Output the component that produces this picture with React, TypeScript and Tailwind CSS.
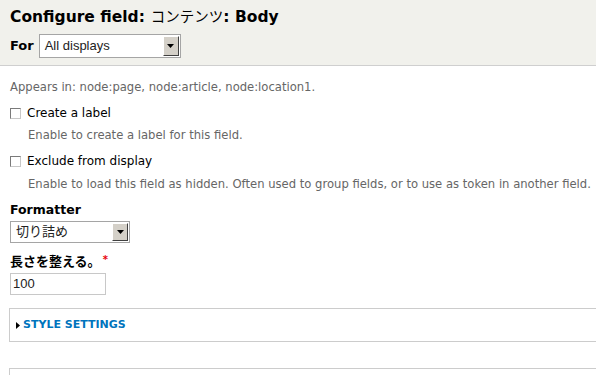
import React from "react";

const F = { fontFamily: '"DejaVu Sans", Verdana, "Noto Sans CJK JP", sans-serif' };
const A = { fontFamily: '"Liberation Sans", Arial, "Noto Sans CJK JP", sans-serif' };

function Select({ value, width, height }: { value: string; width: string; height: string }) {
  return (
    <div className={`flex ${height} ${width} border border-[#a5a5a5] bg-white`}>
      <div className="flex flex-1 items-center pl-[5px] text-[13px] text-[#222]" style={A}>
        {value}
      </div>
      <div className="m-[1px] flex w-[16px] items-center justify-center border border-t-white border-l-white border-r-[#404040] border-b-[#404040] bg-[#d4d0c8]">
        <svg width="7" height="4" viewBox="0 0 7 4">
          <path d="M0 0h7L3.5 4z" fill="#000" />
        </svg>
      </div>
    </div>
  );
}

function Checkbox() {
  return <div className="h-[11px] w-[11px] shrink-0 border border-[#7a7a7a] border-r-[#c8c8c8] border-b-[#c8c8c8] bg-white" />;
}

export default function App() {
  return (
    <div className="h-[375px] w-[596px] overflow-hidden bg-white" style={F}>
      <div className="h-[66px] border-b border-[#cfcfcf] bg-[#f1f1ec] px-[10px] pt-[6px]">
        <h1 className="flex items-baseline whitespace-nowrap text-[15.5px] font-bold leading-[20px] text-black">
          Configure field:
          <span className="ml-[6px] text-[14.5px] font-normal" style={{ fontFamily: '"Noto Sans CJK JP", sans-serif' }}>
            コンテンツ
          </span>
          <span>: Body</span>
        </h1>
        <div className="mt-[7px] flex items-center gap-[5px]">
          <span className="text-[13px] font-bold text-black">For</span>
          <Select value="All displays" width="w-[142px]" height="h-[24px]" />
        </div>
      </div>

      <div className="px-[10px] pt-[14px]">
        <div className="whitespace-nowrap text-[11.6px] leading-[14px] text-[#666]">
          Appears in: node:page, node:article, node:location1.
        </div>

        <div className="mt-[12px] flex items-center gap-[6px]">
          <Checkbox />
          <span className="text-[12px] leading-[14px] text-black">Create a label</span>
        </div>
        <div className="mt-[8px] pl-[18px] text-[11.6px] leading-[14px] text-[#666]">
          Enable to create a label for this field.
        </div>

        <div className="mt-[12px] flex items-center gap-[6px]">
          <Checkbox />
          <span className="text-[12px] leading-[14px] text-black">Exclude from display</span>
        </div>
        <div className="mt-[9px] whitespace-nowrap pl-[18px] text-[11.6px] leading-[14px] text-[#666]">
          Enable to load this field as hidden. Often used to group fields, or to use as token in another field.
        </div>

        <div className="mt-[11px] text-[12.5px] font-bold leading-[16px] text-black">Formatter</div>
        <div className="mt-[3px]">
          <Select value="切り詰め" width="w-[120px]" height="h-[22px]" />
        </div>

        <div className="mt-[11px] flex items-start text-[13px] font-bold leading-[16px] text-black">
          <span>長さを整える。</span>
          <span className="ml-[2px] text-[10px] leading-[12px] text-red-600">*</span>
        </div>
        <div className="mt-[3px] flex h-[22px] w-[96px] items-center border border-[#c8c8c8] bg-white pl-[2px] text-[13px] text-[#222]" style={A}>
          100
        </div>
      </div>

      <div className="ml-[9px] mt-[13px] flex h-[34px] items-center border border-r-0 border-[#cccccc] pl-[6px]">
        <svg width="4" height="7" viewBox="0 0 4 7" className="mr-[3px]">
          <path d="M0 0L4 3.5L0 7z" fill="#000" />
        </svg>
        <span className="text-[11px] font-bold text-[#0074bd]">STYLE SETTINGS</span>
      </div>

      <div className="ml-[9px] mt-[26px] h-[30px] border border-r-0 border-[#cccccc]" />
    </div>
  );
}
